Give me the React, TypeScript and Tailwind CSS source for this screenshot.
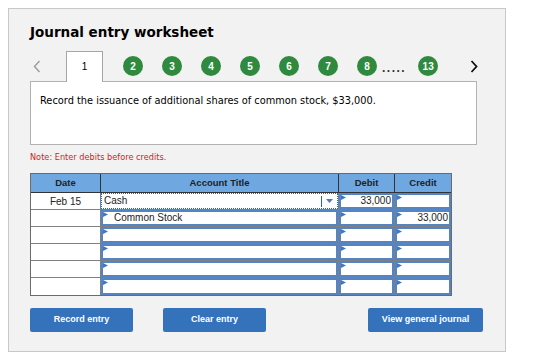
import React from "react";

const steps = ["2", "3", "4", "5", "6", "7", "8"];

const Marker = () => (
  <svg
    className="absolute left-0 top-0"
    width="5"
    height="6"
    viewBox="0 0 5 6"
  >
    <polygon points="0,0 5,2.5 0,5" fill="#3d78c8" />
  </svg>
);

const InputCell = ({
  width,
  text,
  align = "right",
  marker = true,
}: {
  width: string;
  text?: string;
  align?: "left" | "right";
  marker?: boolean;
}) => (
  <div className={`${width} h-full border-r border-[#7f7f7f] last:border-r-0`}>
    <div
      className={`relative h-full border-2 border-[#5584c4] bg-white flex items-center ${
        align === "right" ? "justify-end pr-[1px]" : "justify-start pl-[11px]"
      }`}
    >
      {marker && <Marker />}
      {text && <span className="leading-none">{text}</span>}
    </div>
  </div>
);

const Row = ({
  date,
  account,
  debit,
  credit,
  first,
  last,
}: {
  date?: string;
  account?: string;
  debit?: string;
  credit?: string;
  first?: boolean;
  last?: boolean;
}) => (
  <div
    className={`flex h-[17px] ${last ? "" : "border-b border-[#7f7f7f]"}`}
  >
    <div className="w-[70px] h-full border-r border-[#7f7f7f] bg-white flex items-center justify-center">
      {date}
    </div>
    {first ? (
      <div className="w-[238px] h-full border-r border-[#7f7f7f]">
        <div className="h-full border border-dotted border-[#2d64b8] bg-white flex items-center pl-[2px]">
          <span className="flex-1 leading-none">{account}</span>
          <div className="w-px h-[11px] bg-[#2d64b8]" />
          <div className="w-[15px] flex items-center justify-center">
            <svg width="7" height="4" viewBox="0 0 7 4">
              <polygon points="0,0 7,0 3.5,4" fill="#4a7cc2" />
            </svg>
          </div>
        </div>
      </div>
    ) : (
      <InputCell width="w-[238px]" text={account} align="left" />
    )}
    <InputCell width="w-[56px]" text={debit} />
    <InputCell width="flex-1" text={credit} />
  </div>
);

export default function App() {
  return (
    <div className="w-[535px] h-[358px] bg-white pt-[8px] pl-[8px]">
      <div className="w-[498px] h-[344px] border border-[#c8c8c8] bg-[#f2f2f2] pl-[21px] pt-[16px]">
        <h1 className="font-['DejaVu_Sans',sans-serif] font-bold text-[13.5px] leading-[15px] text-black">
          Journal entry worksheet
        </h1>

        <div className="flex items-center h-[30px] mt-[11px] font-['Liberation_Sans',Arial,sans-serif]">
          <svg className="ml-[3px]" width="8" height="13" viewBox="0 0 8 13">
            <polyline
              points="6.5,1 1.5,6.5 6.5,12"
              fill="none"
              stroke="#9b9b9b"
              strokeWidth="1.4"
            />
          </svg>
          <div className="ml-[25px] self-stretch w-[37px] -mb-px relative z-10 border border-b-0 border-[#a6a6a6] bg-white flex items-center justify-center text-[10px] text-black pb-[2px]">
            1
          </div>
          <div className="flex items-center gap-[19px] ml-[20px]">
            {steps.map((s) => (
              <div
                key={s}
                className="w-5 h-5 rounded-full bg-[#2f8a3f] text-white text-[10px] font-bold flex items-center justify-center"
              >
                {s}
              </div>
            ))}
          </div>
          <span className="ml-[5px] text-[12px] font-bold tracking-[1.5px] text-[#333] leading-none pt-[3px]">
            .....
          </span>
          <div className="ml-[12px] w-5 h-5 rounded-full bg-[#2f8a3f] text-white text-[10px] font-bold flex items-center justify-center">
            13
          </div>
          <svg className="ml-[32px]" width="8" height="13" viewBox="0 0 8 13">
            <polyline
              points="1.5,1 6.5,6.5 1.5,12"
              fill="none"
              stroke="#111"
              strokeWidth="1.8"
            />
          </svg>
        </div>

        <div className="w-[447px] h-[64px] border border-[#b3b3b3] bg-white pl-[9px] pt-[12px] font-['DejaVu_Sans',sans-serif] text-[9.8px] text-black">
          Record the issuance of additional shares of common stock, $33,000.
        </div>

        <p className="mt-[7px] font-['DejaVu_Sans',sans-serif] text-[8.2px] leading-[10px] text-[#cc1f1f]">
          Note: Enter debits before credits.
        </p>

        <div className="mt-[11px] w-[422px] border border-[#6b6b6b] font-['Liberation_Sans',Arial,sans-serif] text-[10px] text-[#222]">
          <div className="flex h-[19px] bg-[#6fa8e0] border-b border-[#333] font-bold text-[9.5px]">
            <div className="w-[70px] border-r border-[#333] flex items-center justify-center">
              Date
            </div>
            <div className="w-[238px] border-r border-[#333] flex items-center justify-center">
              Account Title
            </div>
            <div className="w-[56px] border-r border-[#333] flex items-center justify-center">
              Debit
            </div>
            <div className="flex-1 flex items-center justify-center">
              Credit
            </div>
          </div>
          <Row date="Feb 15" account="Cash" debit="33,000" first />
          <Row account="Common Stock" credit="33,000" />
          <Row />
          <Row />
          <Row />
          <Row last />
        </div>

        <div className="flex mt-[12px] font-['Liberation_Sans',Arial,sans-serif] text-[9px] font-bold text-white">
          <button className="w-[103px] h-[24px] rounded-[2px] bg-[#3472bc]">
            Record entry
          </button>
          <button className="ml-[30px] w-[103px] h-[24px] rounded-[2px] bg-[#3472bc]">
            Clear entry
          </button>
          <button className="ml-[102px] w-[115px] h-[24px] rounded-[2px] bg-[#3472bc]">
            View general journal
          </button>
        </div>
      </div>
    </div>
  );
}
